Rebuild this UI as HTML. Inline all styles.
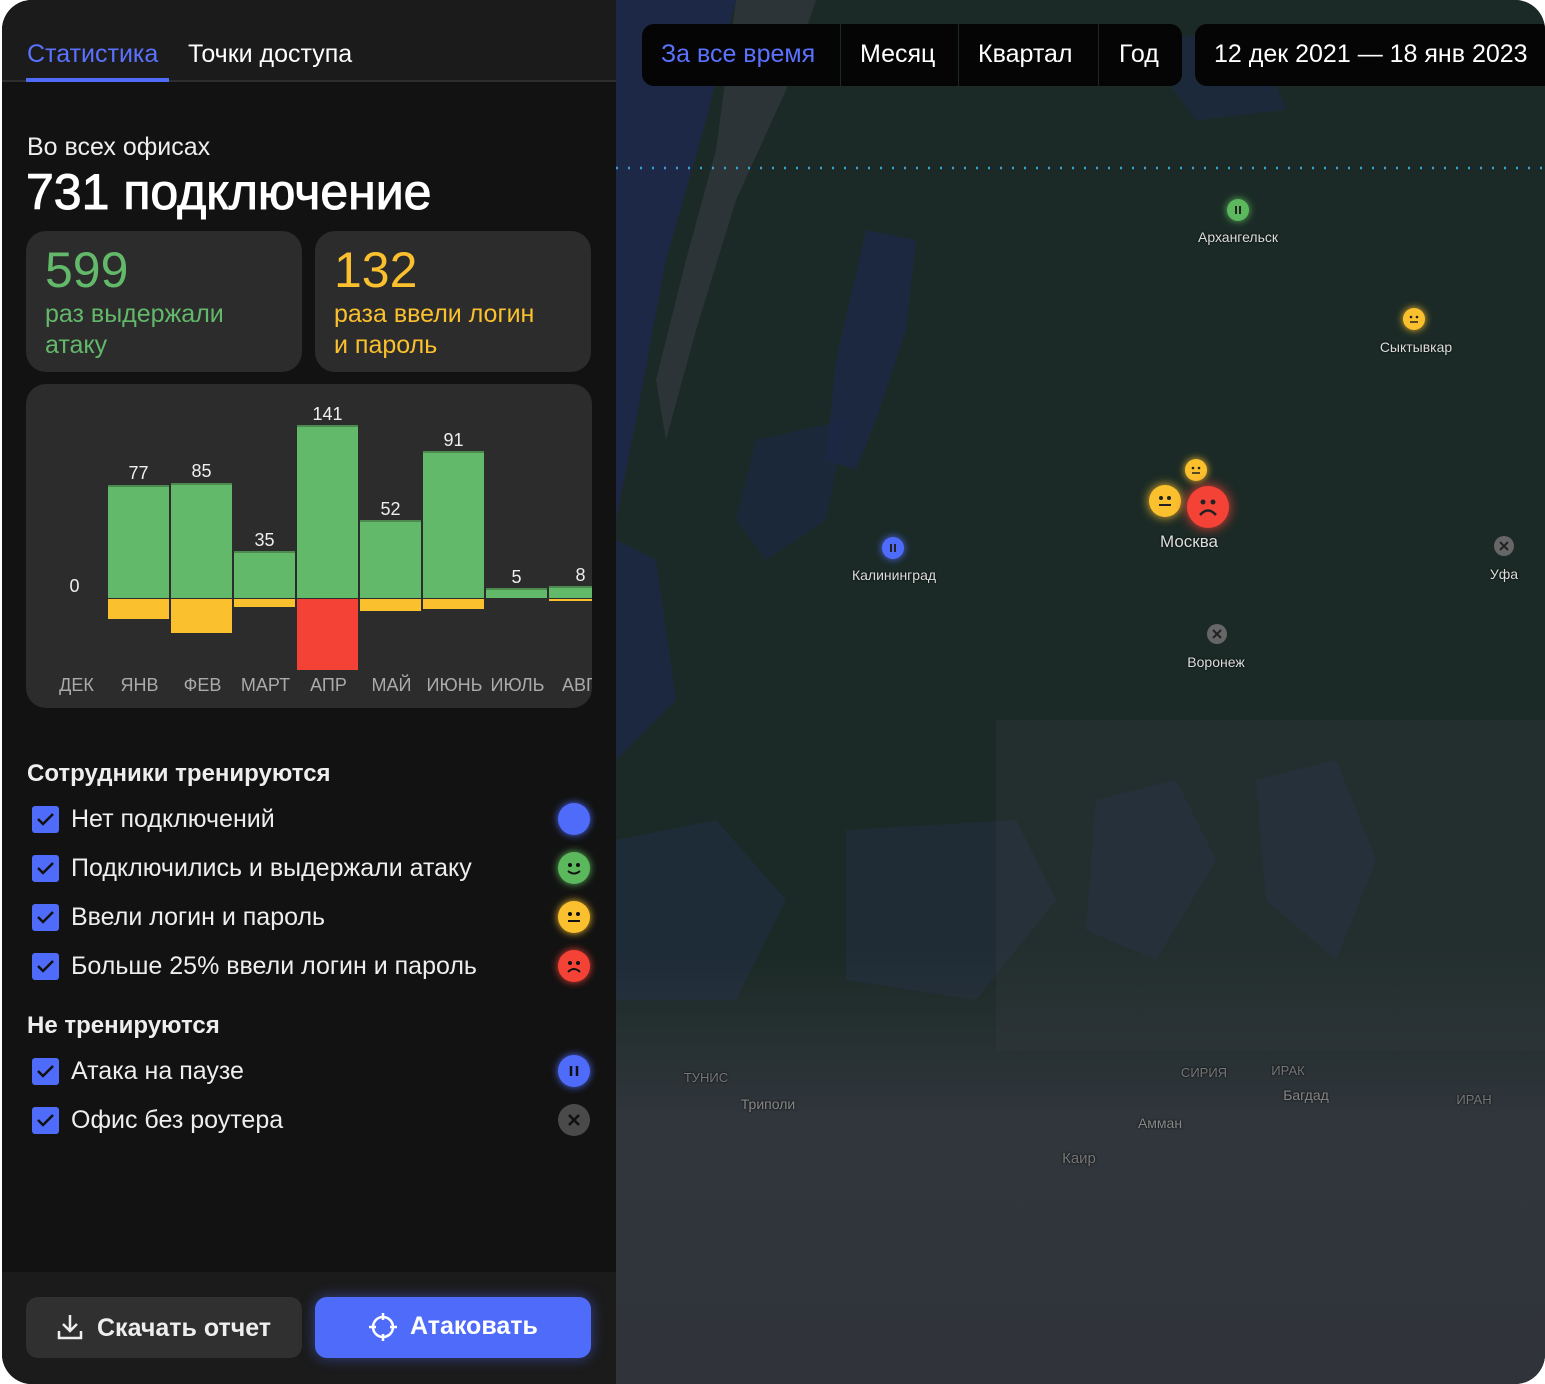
<!DOCTYPE html>
<html><head><meta charset="utf-8"><style>
*{margin:0;padding:0;box-sizing:border-box}
body{width:1545px;height:1384px;background:#fff;font-family:"Liberation Sans","Noto Sans CJK SC",sans-serif;position:relative;overflow:hidden;color:#fff}
#wrap{position:absolute;left:2px;top:0;width:1543px;height:1384px;border-radius:30px;overflow:hidden;background:#1c2a27}
#left{position:absolute;left:0;top:0;width:614px;height:1384px;background:#121212}
#tabs{position:absolute;left:0;top:0;width:614px;height:82px;background:#1b1b1b;border-bottom:2px solid #2e2e2e}
.tab{position:absolute;top:40px;font-size:25px}
#map{position:absolute;left:614px;top:0;width:929px;height:1384px;overflow:hidden;background:#1b2a26}
.card{position:absolute;background:#2c2c2c;border-radius:20px}
.big{font-size:50px;position:absolute;left:19px;top:10px}
.sub{font-size:25px;position:absolute;left:19px;top:68px;line-height:31px}
.bar{position:absolute;width:61px}
.g{background:#63b96a;border-top:2px solid #4c8a50}
.y{background:#fbc02d}
.lbl{position:absolute;font-size:18px;color:#eee;width:61px;text-align:center}
.mon{position:absolute;top:675px;font-size:18px;color:#aaa;width:63px;text-align:center}
.row{position:absolute;left:30px;font-size:25px;color:#eee}
.cb{position:absolute;left:0;top:0;width:27px;height:27px;background:#4f6bfa;border-radius:3px}
.cb svg{position:absolute;left:3px;top:3px}
.row span{position:absolute;left:39px;top:-1px;white-space:nowrap}
.ic{position:absolute;left:556px;width:32px;height:32px;border-radius:50%}
.seg{position:absolute;top:24px;height:62px;background:#050505}
.city{position:absolute;font-size:14px;color:#ddd;text-shadow:0 0 2px #000;transform:translateX(-50%);white-space:nowrap}
.pin{position:absolute;border-radius:50%;transform:translate(-50%,-50%)}
</style></head><body>
<div id="wrap">
<div id="map">
 <svg width="929" height="1384" style="position:absolute;left:0;top:0">
  <path d="M0 0 L120 0 L90 120 L50 260 L20 420 L0 520Z" fill="#1d2846"/>
  <path d="M0 540 L40 560 L60 700 L0 760Z" fill="#1d2846" opacity=".8"/>
  <path d="M120 0 L200 0 L170 90 L120 200 L80 330 L50 440 L40 380 L70 260 L100 150Z" fill="#3a3d46" opacity=".55"/>
  <path d="M250 230 L300 240 L290 330 L260 420 L240 470 L210 460 L220 360Z" fill="#1d2846" opacity=".8"/>
  <path d="M140 440 L230 420 L210 520 L150 560 L120 520Z" fill="#1d2846" opacity=".6"/>
  <path d="M520 40 L640 30 L670 110 L580 120Z" fill="#1e2a48" opacity=".6"/>
  <path d="M0 840 L100 820 L170 900 L120 1000 L0 1000Z" fill="#232f50" opacity=".45"/>
  <path d="M230 830 L400 820 L440 900 L360 1000 L230 980Z" fill="#262f50" opacity=".4"/>
  <path d="M480 800 L560 780 L600 860 L540 960 L470 930Z" fill="#252d50" opacity=".4"/>
  <path d="M640 780 L720 760 L760 860 L720 960 L650 900Z" fill="#242c50" opacity=".4"/>
  <path d="M380 720 L929 720 L929 1050 L380 1050Z" fill="#3a3f48" opacity=".25"/>
  <path d="M0 168 H929" stroke="#3aa0d8" stroke-width="2.5" stroke-dasharray="2 10"/>
 </svg>
 <div style="position:absolute;left:0;top:0;width:929px;height:1384px;background:linear-gradient(180deg,rgba(0,0,0,0) 0,rgba(0,0,0,0) 950px,rgba(52,56,64,.85) 1120px,#30343a 1384px)"></div>
 <div class="seg" style="left:26px;width:198px;border-radius:12px 0 0 12px;color:#5b72ff;font-size:25px;padding:16px 0 0 19px">За все время</div>
 <div class="seg" style="left:225px;width:117px;color:#fff;font-size:25px;padding:16px 0 0 19px">Месяц</div>
 <div class="seg" style="left:343px;width:139px;color:#fff;font-size:25px;padding:16px 0 0 19px">Квартал</div>
 <div class="seg" style="left:483px;width:83px;border-radius:0 12px 12px 0;color:#fff;font-size:25px;padding:16px 0 0 20px">Год</div>
 <div class="seg" style="left:579px;width:360px;border-radius:12px;color:#fff;font-size:25px;padding:16px 0 0 19px;white-space:nowrap">12 дек 2021 — 18 янв 2023</div>

 <svg class="pin" style="left:622px;top:210px;background:#5cb85c;box-shadow:0 0 8px #5cb85c" width="22" height="22"><path d="M9 7V15M13 7V15" stroke="#222" stroke-width="2"/></svg>
 <div class="city" style="left:622px;top:229px">Архангельск</div>
 <svg class="pin" style="left:798px;top:319px;background:#fbc02d;box-shadow:0 0 8px #fbc02d" width="22" height="22"><circle cx="8" cy="9" r="1.3" fill="#222"/><circle cx="14" cy="9" r="1.3" fill="#222"/><path d="M7 14H15" stroke="#222" stroke-width="1.5"/></svg>
 <div class="city" style="left:800px;top:339px">Сыктывкар</div>
 <svg class="pin" style="left:580px;top:470px;background:#fbc02d;box-shadow:0 0 8px #fbc02d" width="22" height="22"><circle cx="8" cy="9" r="1.3" fill="#222"/><circle cx="14" cy="9" r="1.3" fill="#222"/><path d="M7 14H15" stroke="#222" stroke-width="1.5"/></svg>
 <svg class="pin" style="left:549px;top:501px;background:#fbc02d;box-shadow:0 0 10px #fbc02d" width="32" height="32"><circle cx="12" cy="13" r="2" fill="#222"/><circle cx="20" cy="13" r="2" fill="#222"/><path d="M10 20H22" stroke="#222" stroke-width="2"/></svg>
 <svg class="pin" style="left:592px;top:507px;background:#f44336;box-shadow:0 0 12px #f44336" width="42" height="42"><circle cx="16" cy="16" r="2.5" fill="#222"/><circle cx="26" cy="16" r="2.5" fill="#222"/><path d="M13 29 Q21 20 29 29" stroke="#222" stroke-width="2.5" fill="none"/></svg>
 <div class="city" style="left:573px;top:532px;font-size:17px">Москва</div>
 <svg class="pin" style="left:277px;top:548px;background:#4f6bfa;box-shadow:0 0 8px #4f6bfa" width="22" height="22"><path d="M9 7V15M13 7V15" stroke="#222" stroke-width="2"/></svg>
 <div class="city" style="left:278px;top:567px">Калининград</div>
 <svg class="pin" style="left:601px;top:634px;background:#666" width="20" height="20"><path d="M6 6L14 14M14 6L6 14" stroke="#222" stroke-width="2"/></svg>
 <div class="city" style="left:600px;top:654px">Воронеж</div>
 <svg class="pin" style="left:888px;top:546px;background:#666" width="20" height="20"><path d="M6 6L14 14M14 6L6 14" stroke="#222" stroke-width="2"/></svg>
 <div class="city" style="left:888px;top:566px">Уфа</div>
 <div class="city" style="left:90px;top:1070px;color:#777;font-size:13px">ТУНИС</div>
 <div class="city" style="left:152px;top:1096px;color:#888">Триполи</div>
 <div class="city" style="left:588px;top:1065px;color:#777;font-size:13px">СИРИЯ</div>
 <div class="city" style="left:672px;top:1063px;color:#777;font-size:13px">ИРАК</div>
 <div class="city" style="left:690px;top:1087px;color:#888">Багдад</div>
 <div class="city" style="left:858px;top:1092px;color:#777;font-size:13px">ИРАН</div>
 <div class="city" style="left:544px;top:1115px;color:#888">Амман</div>
 <div class="city" style="left:463px;top:1150px;color:#777;font-size:15px">Каир</div>
</div>

<div id="left">
 <div id="tabs">
  <div class="tab" style="left:25px;color:#5b72ff">Статистика</div>
  <div style="position:absolute;left:24px;top:78px;width:143px;height:4px;background:#4f6bfa"></div>
  <div class="tab" style="left:186px">Точки доступа</div>
 </div>
 <div style="position:absolute;left:25px;top:133px;font-size:25px;color:#eee">Во всех офисах</div>
 <div style="position:absolute;left:24px;top:163px;font-size:50px;letter-spacing:0px;-webkit-text-stroke:1px #fff">731 подключение</div>
 <div class="card" style="left:24px;top:231px;width:276px;height:141px"><div class="big" style="color:#63b96a">599</div><div class="sub" style="color:#63b96a">раз выдержали<br>атаку</div></div>
 <div class="card" style="left:313px;top:231px;width:276px;height:141px"><div class="big" style="color:#fbc02d">132</div><div class="sub" style="color:#fbc02d">раза ввели логин<br>и пароль</div></div>
 <div class="card" style="left:24px;top:384px;width:566px;height:324px;overflow:hidden">
  <div class="lbl" style="left:18px;top:192px">0</div>
 </div>
 <div style="position:absolute;left:0;top:0">
  <div class="bar g" style="left:106px;top:485px;height:113px"></div><div class="bar y" style="left:106px;top:599px;height:20px"></div><div class="lbl" style="left:106px;top:463px">77</div>
  <div class="bar g" style="left:169px;top:483px;height:115px"></div><div class="bar y" style="left:169px;top:599px;height:34px"></div><div class="lbl" style="left:169px;top:461px">85</div>
  <div class="bar g" style="left:232px;top:551px;height:47px"></div><div class="bar y" style="left:232px;top:599px;height:8px"></div><div class="lbl" style="left:232px;top:530px">35</div>
  <div class="bar g" style="left:295px;top:425px;height:173px"></div><div class="bar" style="left:295px;top:599px;height:71px;background:#f44336"></div><div class="lbl" style="left:295px;top:404px">141</div>
  <div class="bar g" style="left:358px;top:520px;height:78px"></div><div class="bar y" style="left:358px;top:599px;height:12px"></div><div class="lbl" style="left:358px;top:499px">52</div>
  <div class="bar g" style="left:421px;top:451px;height:147px"></div><div class="bar y" style="left:421px;top:599px;height:10px"></div><div class="lbl" style="left:421px;top:430px">91</div>
  <div class="bar g" style="left:484px;top:588px;height:10px"></div><div class="lbl" style="left:484px;top:567px">5</div>
  <div class="bar g" style="left:547px;top:586px;height:12px;width:43px"></div><div class="bar y" style="left:547px;top:599px;height:2px;width:43px"></div><div class="lbl" style="left:547px;top:565px;width:63px">8</div>
  <div class="mon" style="left:43px">ДЕК</div><div class="mon" style="left:106px">ЯНВ</div><div class="mon" style="left:169px">ФЕВ</div><div class="mon" style="left:232px">МАРТ</div><div class="mon" style="left:295px">АПР</div><div class="mon" style="left:358px">МАЙ</div><div class="mon" style="left:421px">ИЮНЬ</div><div class="mon" style="left:484px">ИЮЛЬ</div>
  <div class="mon" style="left:560px;width:30px;overflow:hidden;text-align:left">АВГ</div>
 </div>

 <div style="position:absolute;left:25px;top:760px;font-size:24px;font-weight:bold;color:#eee">Сотрудники тренируются</div>
 <div class="row" style="top:806px"><div class="cb"><svg width="21" height="21"><path d="M3 10 L8 15 L18 5" stroke="#111" stroke-width="2.5" fill="none"/></svg></div><span>Нет подключений</span></div>
 <div class="row" style="top:855px"><div class="cb"><svg width="21" height="21"><path d="M3 10 L8 15 L18 5" stroke="#111" stroke-width="2.5" fill="none"/></svg></div><span>Подключились и выдержали атаку</span></div>
 <div class="row" style="top:904px"><div class="cb"><svg width="21" height="21"><path d="M3 10 L8 15 L18 5" stroke="#111" stroke-width="2.5" fill="none"/></svg></div><span>Ввели логин и пароль</span></div>
 <div class="row" style="top:953px"><div class="cb"><svg width="21" height="21"><path d="M3 10 L8 15 L18 5" stroke="#111" stroke-width="2.5" fill="none"/></svg></div><span>Больше 25% ввели логин и пароль</span></div>
 <div style="position:absolute;left:25px;top:1012px;font-size:24px;font-weight:bold;color:#eee">Не тренируются</div>
 <div class="row" style="top:1058px"><div class="cb"><svg width="21" height="21"><path d="M3 10 L8 15 L18 5" stroke="#111" stroke-width="2.5" fill="none"/></svg></div><span>Атака на паузе</span></div>
 <div class="row" style="top:1107px"><div class="cb"><svg width="21" height="21"><path d="M3 10 L8 15 L18 5" stroke="#111" stroke-width="2.5" fill="none"/></svg></div><span>Офис без роутера</span></div>

 <div class="ic" style="top:803px;background:#4f6bfa;box-shadow:0 0 8px #4f6bfa"></div>
 <svg class="ic" style="top:852px;background:#5cb85c;box-shadow:0 0 8px #5cb85c" width="32" height="32"><circle cx="12" cy="13" r="2" fill="#111"/><circle cx="20" cy="13" r="2" fill="#111"/><path d="M10 19 Q16 24 22 19" stroke="#111" stroke-width="2" fill="none"/></svg>
 <svg class="ic" style="top:901px;background:#fbc02d;box-shadow:0 0 8px #fbc02d" width="32" height="32"><circle cx="12" cy="13" r="2" fill="#111"/><circle cx="20" cy="13" r="2" fill="#111"/><path d="M10 20 H22" stroke="#111" stroke-width="2"/></svg>
 <svg class="ic" style="top:950px;background:#f44336;box-shadow:0 0 8px #f44336" width="32" height="32"><circle cx="12" cy="13" r="2" fill="#111"/><circle cx="20" cy="13" r="2" fill="#111"/><path d="M10 22 Q16 16 22 22" stroke="#111" stroke-width="2" fill="none"/></svg>
 <svg class="ic" style="top:1055px;background:#4f6bfa;box-shadow:0 0 8px #4f6bfa" width="32" height="32"><path d="M13 11 V21 M19 11 V21" stroke="#111" stroke-width="2.5"/></svg>
 <svg class="ic" style="top:1104px;background:#4a4a4a" width="32" height="32"><path d="M11 11 L21 21 M21 11 L11 21" stroke="#111" stroke-width="2.5"/></svg>

 <div style="position:absolute;left:0;top:1272px;width:614px;height:112px;background:#1b1b1b"></div>
 <div style="position:absolute;left:24px;top:1297px;width:276px;height:61px;background:#303030;border-radius:12px;font-size:25px;font-weight:bold;padding:17px 0 0 71px;color:#eee">Скачать отчет</div>
 <svg style="position:absolute;left:54px;top:1313px" width="28" height="28"><path d="M14 2 V18 M7 11 L14 18 L21 11 M3 18 V25 H25 V18" stroke="#eee" stroke-width="2.5" fill="none"/></svg>
 <div style="position:absolute;left:313px;top:1297px;width:276px;height:61px;background:#4f6bfa;border-radius:12px;font-size:25px;font-weight:bold;padding:15px 0 0 95px;box-shadow:0 0 14px rgba(79,107,250,.5)">Атаковать</div>
 <svg style="position:absolute;left:366px;top:1312px" width="30" height="30"><circle cx="15" cy="15" r="10" stroke="#fff" stroke-width="2.5" fill="none"/><path d="M15 1 V8 M15 22 V29 M1 15 H8 M22 15 H29" stroke="#fff" stroke-width="2.5"/></svg>
</div>
</div>
</body></html>
